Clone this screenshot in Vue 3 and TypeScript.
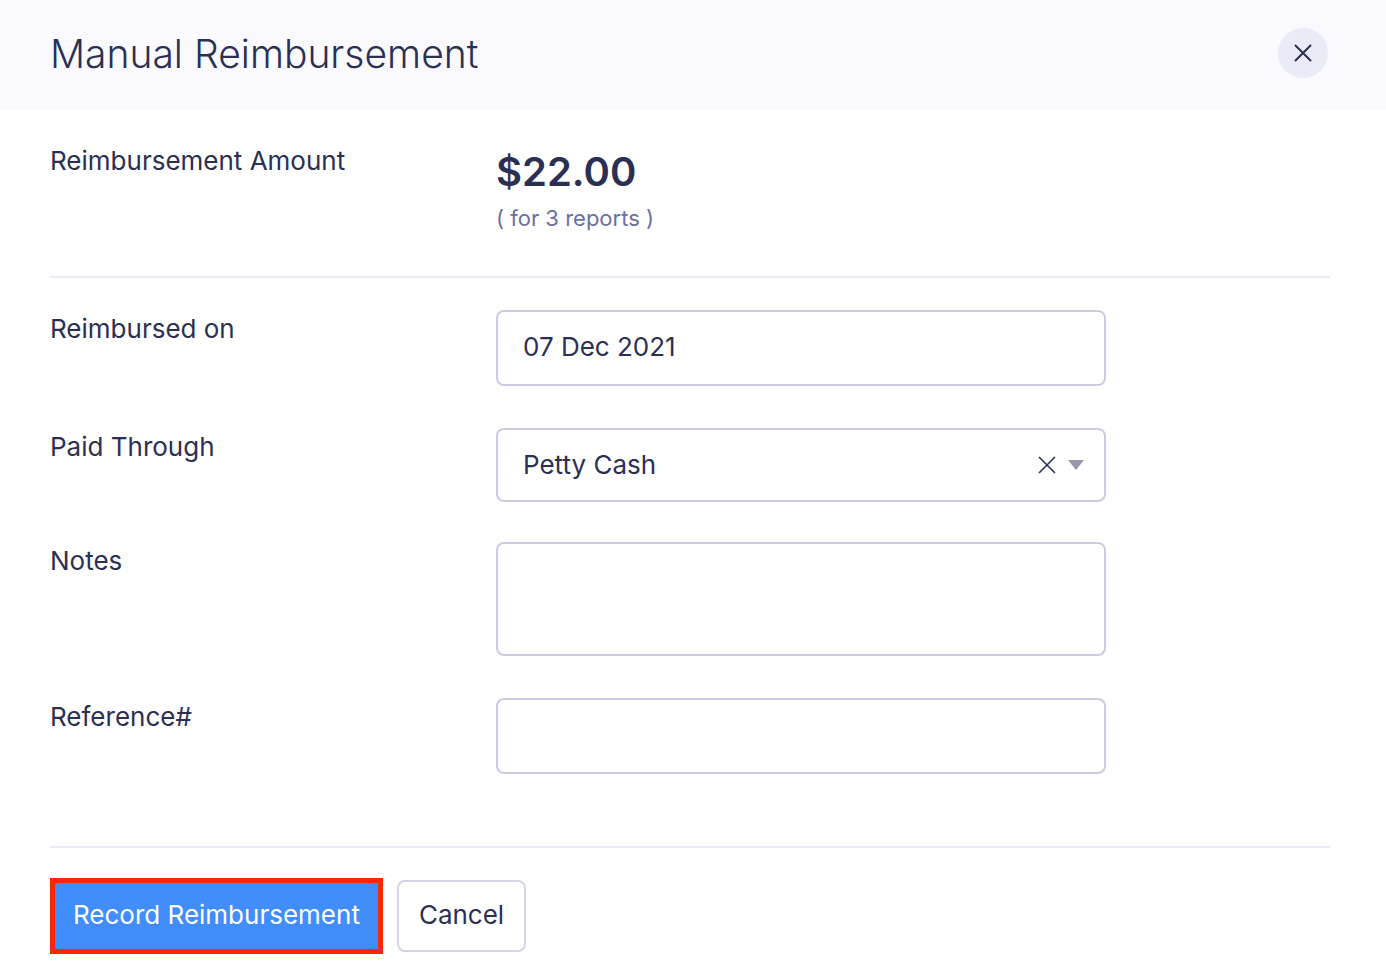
<script setup lang="ts">
import { ref } from 'vue'

const reimbursedOn = ref('07 Dec 2021')
const paidThrough = ref('Petty Cash')
const notes = ref('')
const reference = ref('')
</script>

<template>
  <main class="dialog">
    <header class="header">
      <h1 class="title">Manual Reimbursement</h1>
      <button class="close" type="button" aria-label="Close">
        <svg width="18" height="18" viewBox="0 0 18 18"><path d="M1.5 1.5l15 15M16.5 1.5l-15 15" /></svg>
      </button>
    </header>
    <form class="form" @submit.prevent>
      <section class="row summary">
        <div class="label">Reimbursement Amount</div>
        <div>
          <div class="amount">$22.00</div>
          <div class="count">( for 3 reports )</div>
        </div>
      </section>
      <section class="fields">
        <div class="row">
          <label class="label" for="date">Reimbursed on</label>
          <input id="date" v-model="reimbursedOn" class="control" type="text" />
        </div>
        <div class="row">
          <label class="label" for="account">Paid Through</label>
          <div class="picker">
            <select id="account" v-model="paidThrough" class="control select">
              <option>Petty Cash</option>
            </select>
            <button class="clear" type="button" aria-label="Clear account" @click="paidThrough = ''">
              <svg width="18" height="18" viewBox="0 0 18 18"><path d="M1 1l16 16M17 1L1 17" /></svg>
            </button>
            <svg class="caret" width="16" height="10" viewBox="0 0 16 10"><path d="M0 0h16L8 10z" /></svg>
          </div>
        </div>
        <div class="row">
          <label class="label" for="notes">Notes</label>
          <textarea id="notes" v-model="notes" class="control notes"></textarea>
        </div>
        <div class="row">
          <label class="label" for="reference">Reference#</label>
          <input id="reference" v-model="reference" class="control" type="text" />
        </div>
      </section>
      <footer class="actions">
        <button class="button primary" type="submit">Record Reimbursement</button>
        <button class="button cancel" type="button">Cancel</button>
      </footer>
    </form>
  </main>
</template>

<style>
body {
  margin: 0;
  background: #fff;
}
</style>

<style scoped>
* {
  box-sizing: border-box;
}
.dialog {
  font-family: Inter, sans-serif;
  font-size: 26px;
  line-height: 32px;
  color: #2c2f54;
}
.header {
  display: flex;
  align-items: center;
  justify-content: space-between;
  padding: 28px 58px 32px 50px;
  background: #f9f9fe;
}
.title {
  margin: 0;
  padding-top: 2px;
  font-size: 39px;
  line-height: 48px;
  font-weight: 300;
}
button,
input,
select,
textarea {
  font: inherit;
  color: inherit;
}
.close {
  display: flex;
  align-items: center;
  justify-content: center;
  width: 50px;
  height: 50px;
  padding: 0;
  border: 0;
  border-radius: 50%;
  background: #e9ebf7;
}
.close path,
.clear path {
  fill: none;
  stroke: #2c2f54;
  stroke-width: 2;
  stroke-linecap: round;
}
.clear path {
  stroke-width: 1.6;
  stroke-linecap: butt;
}
.form {
  padding: 0 56px 0 50px;
}
.row {
  display: grid;
  grid-template-columns: 446px minmax(0, 610px);
  align-items: start;
}
.summary {
  padding: 35px 0 42px;
  border-bottom: 2px solid #ebebf7;
}
.label {
  padding-top: 3px;
}
.summary .label {
  padding: 0;
}
.amount {
  padding-top: 1px;
  font-size: 40px;
  line-height: 52px;
  font-weight: 600;
}
.count {
  padding-top: 4px;
  font-size: 22px;
  color: #6c6f9f;
}
.fields {
  display: flex;
  flex-direction: column;
  gap: 42px;
  padding: 32px 0 72px;
  border-bottom: 2px solid #ebebf7;
}
.control {
  display: block;
  width: 100%;
  height: 76px;
  margin: 0;
  padding: 0 25px 3px;
  border: 2px solid #cbcbe1;
  border-radius: 8px;
  background: #fff;
}
.select {
  height: 74px;
  padding-bottom: 0;
  appearance: none;
}
.picker {
  position: relative;
  height: 72px;
}
.clear {
  position: absolute;
  top: 28px;
  right: 50px;
  display: flex;
  padding: 0;
  border: 0;
  background: none;
}
.caret {
  position: absolute;
  top: 32px;
  right: 22px;
  fill: #9696b0;
  pointer-events: none;
}
.notes {
  height: 114px;
  padding: 20px 25px;
  resize: none;
}
.actions {
  display: flex;
  align-items: center;
  gap: 14px;
  padding: 30px 0 26px;
}
.button {
  height: 72px;
  padding: 0 20px 2px;
  border: 2px solid #d4d3e7;
  border-radius: 8px;
  background: #fff;
}
.primary {
  height: 76px;
  padding: 0 18px 2px;
  border: 5px solid #ff2600;
  border-radius: 0;
  background: #408dfb;
  color: #fff;
}
</style>
